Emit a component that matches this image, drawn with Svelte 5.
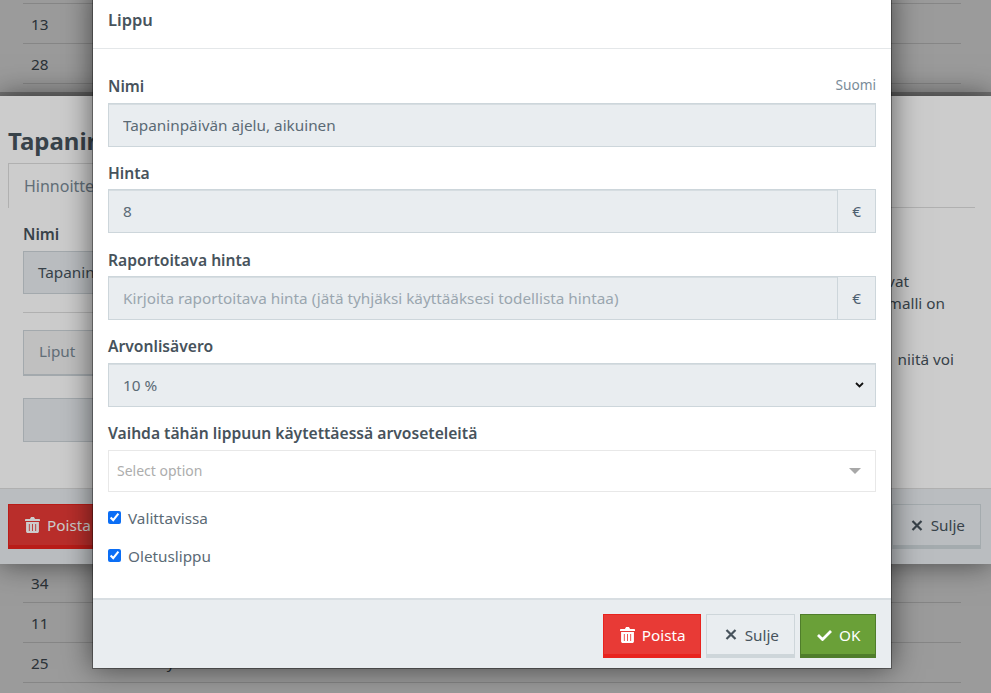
<script>
  // rows of the table that sits behind both dialogs
  const topRows = ['13', '28'];
  const bottomRows = [
    { n: '34', t: '' },
    { n: '11', t: '' },
    { n: '25', t: 'Pyhä' }
  ];
</script>

{#snippet trash()}
  <svg class="ico" width="15" height="16" viewBox="0 0 14 16" preserveAspectRatio="none" aria-hidden="true">
    <path fill="currentColor" fill-rule="evenodd" d="M4.6 2 5.4.4C5.5.2 5.700 0 6 0h2c.3 0 .5.2.6.4L9.4 2H13.300c.4 0 .7.300.7.700V4H0V2.700C0 2.300.3 2 .7 2ZM1 5h12v9.500c0 .8-.7 1.500-1.500 1.500h-9C1.700 16 1 15.300 1 14.500ZM3.600 7v7h.8V7Zm3 0v7h.8V7Zm3 0v7h.8V7Z"/>
  </svg>
{/snippet}

{#snippet times()}
  <svg class="ico" width="12" height="11" viewBox="0 0 12 11" aria-hidden="true">
    <path fill="none" stroke="currentColor" stroke-width="2.200" d="M1.500 1l9 9M10.500 1l-9 9"/>
  </svg>
{/snippet}

{#snippet check()}
  <svg class="ico" width="15" height="12" viewBox="0 0 15 12" aria-hidden="true">
    <path fill="none" stroke="currentColor" stroke-width="2.800" d="M1 6l4.500 4.500L14 2"/>
  </svg>
{/snippet}

<div class="page">
  <div class="table top">
    {#each topRows as n}
      <div class="row"><span>{n}</span></div>
    {/each}
  </div>
  <div class="table bottom">
    {#each bottomRows as r}
      <div class="row"><span>{r.n}</span><span class="name">{r.t}</span></div>
    {/each}
  </div>

  <div class="backdrop first"></div>

  <section class="dialog under">
    <h2>Tapaninpäivän ajelu</h2>
    <div class="tabs"><div class="tab">Hinnoittelu</div></div>
    <div class="under-body">
      <div class="under-left">
        <div class="label">Nimi</div>
        <div class="field dim">Tapaninpäivän ajelu</div>
        <hr />
        <div class="field liput">Liput</div>
        <div class="field blank"></div>
      </div>
      <div class="under-right">
        <span class="l1">Liput ovat</span>
        <span class="l2">hinnoittelumalli on</span>
        <span class="l3">niitä voi</span>
      </div>
    </div>
    <div class="under-foot">
      <button class="btn red">{@render trash()} Poista</button>
      <span class="grow"></span>
      <button class="btn plain">{@render times()} Sulje</button>
    </div>
  </section>

  <div class="backdrop second"></div>

  <section class="dialog main">
    <header>Lippu</header>
    <div class="body">
      <div class="label-row"><label for="nimi">Nimi</label><span class="lang">Suomi</span></div>
      <input id="nimi" class="input" value="Tapaninpäivän ajelu, aikuinen" />

      <label for="hinta">Hinta</label>
      <div class="group">
        <input id="hinta" class="input" value="8" />
        <span class="addon">€</span>
      </div>

      <label for="rap">Raportoitava hinta</label>
      <div class="group">
        <input id="rap" class="input" placeholder="Kirjoita raportoitava hinta (jätä tyhjäksi käyttääksesi todellista hintaa)" />
        <span class="addon">€</span>
      </div>

      <label for="alv">Arvonlisävero</label>
      <div class="select" id="alv">
        <span>10 %</span>
        <svg width="9" height="6" viewBox="0 0 9 6" aria-hidden="true"><path fill="none" stroke="#111" stroke-width="1.800" d="M1 1l3.500 3.500L8 1"/></svg>
      </div>

      <label for="vaihda">Vaihda tähän lippuun käytettäessä arvoseteleitä</label>
      <div class="multi" id="vaihda">
        <span>Select option</span>
        <i class="caret"></i>
      </div>

      <div class="checks">
        <label class="check"><input type="checkbox" checked /> Valittavissa</label>
        <label class="check"><input type="checkbox" checked /> Oletuslippu</label>
      </div>
    </div>
    <footer>
      <button class="btn red">{@render trash()} Poista</button>
      <button class="btn plain">{@render times()} Sulje</button>
      <button class="btn green">{@render check()} OK</button>
    </footer>
  </section>
</div>

<style>
  :global(body) {
    margin: 0;
    background: #fff;
  }

  .page {
    position: relative;
    height: 693px;
    overflow: hidden;
    font-family: "Noto Sans", sans-serif;
    font-size: 15.3px;
    color: #47535c;
  }

  /* background table */
  .table {
    position: absolute;
    left: 23px;
    right: 30px;
  }
  .table.top {
    top: 3px;
    border-top: 1px solid #ddd;
  }
  .table.bottom {
    top: 563px;
  }
  .row {
    display: flex;
    height: 39px;
    align-items: center;
    padding-left: 8px;
    border-bottom: 1px solid #ddd;
  }
  .name {
    margin-left: 109px;
    position: relative;
    top: -1px;
  }

  .backdrop {
    position: absolute;
    inset: 0;
  }
  .backdrop.first {
    background: rgba(0, 0, 0, 0.24);
  }
  .backdrop.second {
    background: rgba(0, 0, 0, 0.2);
  }

  .dialog {
    position: absolute;
    background: #fff;
    box-shadow: 0 0 28px rgba(0, 0, 0, 0.55);
  }

  /* dialog underneath */
  .under {
    left: 0;
    right: 0;
    top: 96px;
    height: 468px;
    display: flex;
    flex-direction: column;
    box-sizing: border-box;
    padding-top: 30px;
  }
  .under::before {
    content: "";
    position: absolute;
    left: 0;
    right: 0;
    top: -4px;
    height: 4px;
    background: rgba(0, 0, 0, 0.25);
  }
  .under h2 {
    margin: 0 0 7px 8px;
    font-size: 24px;
    line-height: 30px;
    font-weight: 700;
  }
  .tabs {
    margin: 0 16px 0 8px;
    height: 44px;
    border-bottom: 1px solid #ddd;
  }
  .tab {
    width: 200px;
    height: 45px;
    box-sizing: border-box;
    padding: 11px 15px;
    border: 1px solid #ddd;
    border-bottom: 0;
    background: #fff;
    color: #7a8a96;
    font-size: 16px;
  }
  .under-body {
    flex: 1;
    display: flex;
    justify-content: space-between;
    padding: 14px 23px 0;
  }
  .under-left {
    width: 400px;
  }
  .label {
    font-weight: 600;
    font-size: 15.65px;
    line-height: 24px;
    margin-bottom: 5px;
  }
  .field {
    box-sizing: border-box;
    height: 43px;
    padding: 10px 14px;
    border: 1px solid #ccd4d9;
    background: #e9edf0;
  }
  .under-left hr {
    border: 0;
    border-top: 1px solid #ddd;
    margin: 18px 0 17px;
  }
  .field.liput {
    height: 46px;
    padding-left: 15px;
    background: #f0f0f0;
    color: #7a8a96;
    border-bottom-width: 2px;
  }
  .field.blank {
    height: 44px;
    margin-top: 22px;
  }
  .under-right {
    width: 200px;
    line-height: 22px;
    padding-top: 48px;
    white-space: nowrap;
    text-align: right;
  }
  .under-right span {
    display: block;
  }
  .under-right .l1 {
    padding-right: 59px;
  }
  .under-right .l2 {
    padding-right: 23px;
  }
  .under-right .l3 {
    margin-top: 34px;
    padding-right: 14px;
  }
  .under-foot {
    height: 76px;
    box-sizing: border-box;
    display: flex;
    align-items: flex-start;
    padding: 15px 10px 0 8px;
    border-top: 1px solid #ddd;
    background: #e9edf0;
  }
  .under-foot .btn {
    height: 45px;
  }
  .grow {
    flex: 1;
  }

  /* dialog on top */
  .main {
    left: 92px;
    top: -14px;
    width: 800px;
    height: 683px;
    display: flex;
    flex-direction: column;
    box-sizing: border-box;
    border: 1px solid rgba(0, 0, 0, 0.35);
    background-clip: padding-box;
  }
  .main header {
    height: 62px;
    box-sizing: border-box;
    padding: 19px 15px 0;
    font-size: 16.5px;
    line-height: 28px;
    font-weight: 600;
    border-bottom: 1px solid #e4e7e9;
  }
  .body {
    flex: 1;
    display: flex;
    flex-direction: column;
    padding: 23.7px 15px 0;
  }
  .body > label,
  .label-row label {
    display: block;
    font-size: 15.65px;
    font-weight: 600;
    line-height: 24px;
    margin: 14.2px 0 4.5px;
  }
  .label-row {
    display: flex;
    justify-content: space-between;
    align-items: flex-start;
    height: 30px;
    padding-top: 1px;
    box-sizing: border-box;
  }
  .label-row label {
    margin: 0;
  }
  .lang {
    font-size: 13.7px;
    line-height: 22px;
    color: #7a8c99;
  }
  .input {
    display: block;
    width: 100%;
    height: 44px;
    box-sizing: border-box;
    padding: 0 14px;
    border: 1px solid #cdd6db;
    box-shadow: inset 0 1px 0 #d6dde1;
    background: #e9edf0;
    color: #5b6a75;
    font: inherit;
    outline: none;
  }
  .input::placeholder {
    color: #9aa6af;
    opacity: 1;
  }
  .group {
    display: flex;
  }
  .group .input {
    flex: 1;
    border-right: 0;
  }
  .addon {
    width: 39px;
    box-sizing: border-box;
    display: flex;
    align-items: center;
    justify-content: center;
    border: 1px solid #cdd6db;
    background: #e9edf0;
    color: #4d6070;
  }
  .select {
    height: 44px;
    box-sizing: border-box;
    display: flex;
    align-items: center;
    justify-content: space-between;
    padding: 0 11px 0 14px;
    border: 1px solid #cdd6db;
    box-shadow: inset 0 1px 0 #d6dde1;
    background: #e9edf0;
    color: #5b6a75;
  }
  .multi {
    height: 42px;
    box-sizing: border-box;
    display: flex;
    align-items: center;
    justify-content: space-between;
    margin-top: 0.2px;
    padding: 0 14px 0 8px;
    border: 1px solid #e8e8e8;
    font-size: 14px;
    color: #adadad;
  }
  .caret {
    width: 0;
    height: 0;
    border: 6px solid transparent;
    border-top: 6px solid #a8a8a8;
    border-bottom: 0;
  }
  .checks {
    display: flex;
    flex-direction: column;
    gap: 14px;
    margin-top: 14px;
  }
  .check {
    display: flex;
    align-items: center;
    gap: 7px;
    line-height: 24px;
    color: #5b6a75;
  }
  .check input {
    width: 13px;
    height: 13px;
    margin: 0;
    accent-color: #0b6ef5;
  }
  .main footer {
    height: 70px;
    box-sizing: border-box;
    display: flex;
    justify-content: flex-end;
    gap: 5px;
    padding: 14px 15px 0;
    border-top: 2px solid #d8dee2;
    background: #e9edf0;
  }

  .btn {
    height: 44px;
    box-sizing: border-box;
    display: inline-flex;
    align-items: center;
    gap: 7px;
    padding: 0 14px 0 16px;
    border: 1px solid;
    border-bottom-width: 4px;
    font: inherit;
    cursor: pointer;
  }
  .ico {
    flex: none;
  }
  .btn.red {
    background: #e83a36;
    border-color: #e8231e;
    color: #fff;
  }
  .btn.plain {
    background: #e9edf0;
    border-color: #ced6da;
    color: #47535c;
    padding: 0 15px 0 18px;
    gap: 8px;
  }
  .btn.green {
    background: #6aa038;
    border-color: #4f7d2b;
    color: #fff;
    width: 76px;
    padding: 0 0 0 16px;
  }
</style>
